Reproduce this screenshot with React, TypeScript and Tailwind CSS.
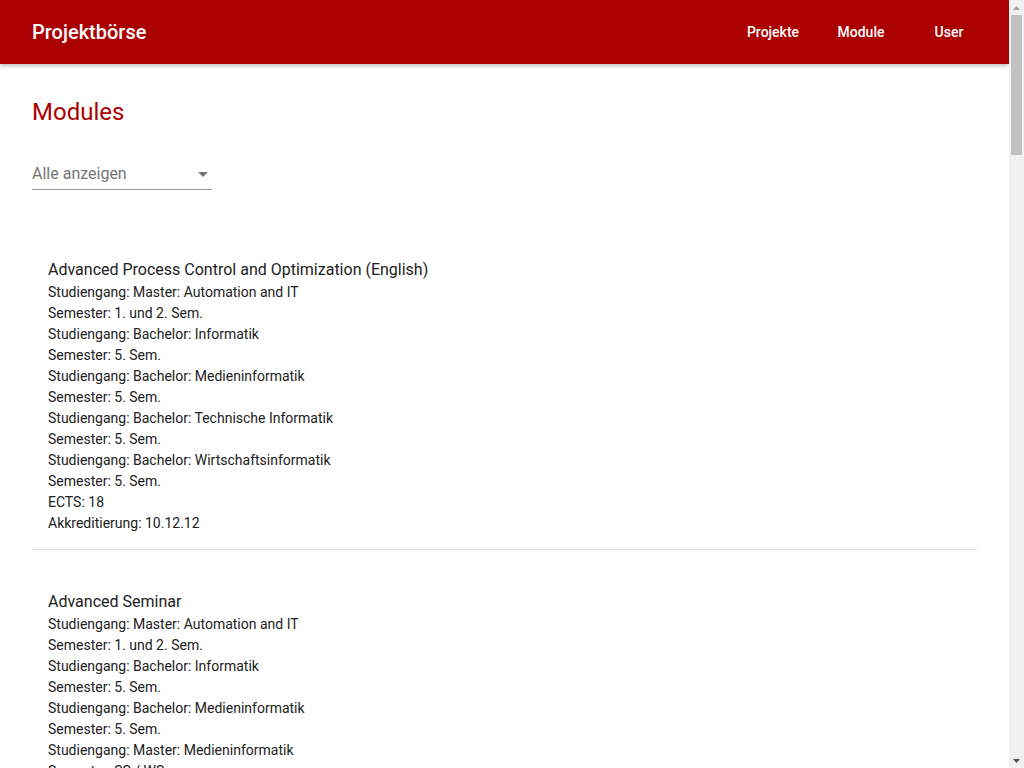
type Module = {
  title: string;
  lines: string[];
};

const modules: Module[] = [
  {
    title: "Advanced Process Control and Optimization (English)",
    lines: [
      "Studiengang: Master: Automation and IT",
      "Semester: 1. und 2. Sem.",
      "Studiengang: Bachelor: Informatik",
      "Semester: 5. Sem.",
      "Studiengang: Bachelor: Medieninformatik",
      "Semester: 5. Sem.",
      "Studiengang: Bachelor: Technische Informatik",
      "Semester: 5. Sem.",
      "Studiengang: Bachelor: Wirtschaftsinformatik",
      "Semester: 5. Sem.",
      "ECTS: 18",
      "Akkreditierung: 10.12.12",
    ],
  },
  {
    title: "Advanced Seminar",
    lines: [
      "Studiengang: Master: Automation and IT",
      "Semester: 1. und 2. Sem.",
      "Studiengang: Bachelor: Informatik",
      "Semester: 5. Sem.",
      "Studiengang: Bachelor: Medieninformatik",
      "Semester: 5. Sem.",
      "Studiengang: Master: Medieninformatik",
      "Semester: SS / WS",
      "ECTS: 6",
      "Akkreditierung: 10.12.12",
    ],
  },
  {
    title: "Bachelorarbeit",
    lines: [
      "Studiengang: Bachelor: Informatik",
      "Semester: 6. Sem.",
      "ECTS: 12",
      "Akkreditierung: 10.12.12",
    ],
  },
];

const navItems = ["Projekte", "Module", "User"];

// window scrollbar, as the browser draws it in the screenshot
function Scrollbar() {
  return (
    <div className="flex w-[15px] shrink-0 flex-col items-center bg-[#f1f1f1]">
      <div className="flex h-[15px] w-full items-center justify-center">
        <svg width="7" height="4" viewBox="0 0 7 4">
          <path d="M0 4L3.5 0L7 4Z" fill="#a3a3a3" />
        </svg>
      </div>
      <div className="h-[140px] w-[11px] bg-[#c1c1c1]" />
      <div className="flex-1" />
      <div className="flex h-[15px] w-full items-center justify-center">
        <svg width="7" height="4" viewBox="0 0 7 4">
          <path d="M0 0L3.5 4L7 0Z" fill="#505050" />
        </svg>
      </div>
    </div>
  );
}

export default function App() {
  return (
    <div className="flex h-screen overflow-hidden bg-white font-['Roboto',sans-serif] text-[#212121]">
      <div className="min-w-0 flex-1 overflow-hidden">
        <header className="flex h-16 items-center bg-[#aa0000] pl-8 pr-4 shadow-[0_2px_4px_rgba(0,0,0,0.25)]">
          <span className="text-[20px] font-medium leading-8 text-white">
            Projektbörse
          </span>
          <nav className="ml-auto flex">
            {navItems.map((item) => (
              <a
                key={item}
                href="#"
                className="flex h-9 min-w-[88px] items-center justify-center px-4 text-sm font-medium text-white"
              >
                {item}
              </a>
            ))}
          </nav>
        </header>

        <main className="px-8 pt-8 pb-16">
          <h1 className="text-2xl leading-8 text-[#aa0000]">Modules</h1>

          <div className="mt-[34px] flex w-[180px] items-center border-b border-[#949494] pb-[3px]">
            <span className="flex-1 text-base leading-6 text-[#757575]">
              Alle anzeigen
            </span>
            <svg width="10" height="5" viewBox="0 0 10 5" className="mr-[4px]">
              <path d="M0 0L5 5L10 0Z" fill="#757575" />
            </svg>
          </div>

          <div className="mt-[52px]">
            {modules.map((m) => (
              <div
                key={m.title}
                className="mt-6 border-b border-[#e0e0e0] px-4 pt-4 pb-[15px]"
              >
                <h3 className="text-base leading-6">{m.title}</h3>
                {m.lines.map((line, i) => (
                  <p key={i} className="text-sm leading-[21px]">
                    {line}
                  </p>
                ))}
              </div>
            ))}
          </div>
        </main>
      </div>
      <Scrollbar />
    </div>
  );
}
